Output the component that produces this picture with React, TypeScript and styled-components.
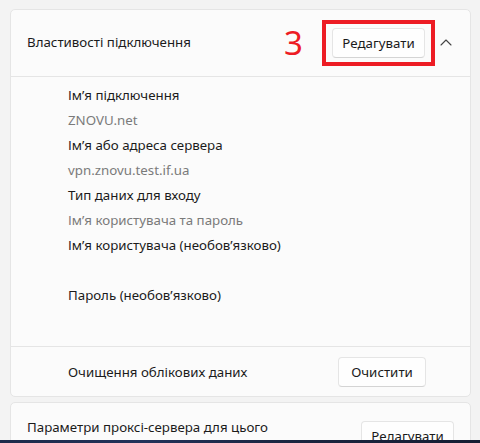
import styled, { createGlobalStyle } from "styled-components"

const GlobalStyle = createGlobalStyle`
	body {
		margin: 0;
		background: #f3f3f3;
		font-family: "Segoe UI", "Noto Sans", sans-serif;
		font-size: 13.3px;
		color: #1b1b1b;
	}
`

type Field = { text: string; muted?: boolean }

const fields: Field[] = [
	{ text: "Ім’я підключення" },
	{ text: "ZNOVU.net", muted: true },
	{ text: "Ім’я або адреса сервера" },
	{ text: "vpn.znovu.test.if.ua", muted: true },
	{ text: "Тип даних для входу" },
	{ text: "Ім’я користувача та пароль", muted: true },
	{ text: "Ім’я користувача (необов’язково)" },
	{ text: "" },
	{ text: "Пароль (необов’язково)" },
]

const ChevronUp = () => (
	<svg width="12" height="7" viewBox="0 0 12 7" fill="none">
		<path d="M1 6L6 1L11 6" stroke="#444" strokeWidth="1.1" strokeLinecap="round" strokeLinejoin="round" />
	</svg>
)

export default function App() {
	return (
		<>
			<GlobalStyle />
			<Page>
				<Card>
					<Header>
						<Title>Властивості підключення</Title>
						<StepNumber>3</StepNumber>
						<Highlight>
							<Button>Редагувати</Button>
						</Highlight>
						<Chevron>
							<ChevronUp />
						</Chevron>
					</Header>
					<Details>
						{fields.map((f, i) => (
							<FieldLine key={i} $muted={f.muted}>
								{f.text}
							</FieldLine>
						))}
					</Details>
					<FooterRow>
						<span>Очищення облікових даних</span>
						<Button $width={88}>Очистити</Button>
					</FooterRow>
				</Card>
				<Card>
					<ProxyRow>
						<ProxyText>Параметри проксі-сервера для цього підключення VPN</ProxyText>
						<Button $offset={4}>Редагувати</Button>
					</ProxyRow>
				</Card>
				<Taskbar />
			</Page>
		</>
	)
}

const Page = styled.div`
	position: relative;
	height: 443px;
	overflow: hidden;
	padding: 9px 9px 0 10px;
	box-sizing: border-box;
	display: flex;
	flex-direction: column;
	gap: 5px;
`

const Card = styled.div`
	background: #fbfbfb;
	border: 1px solid #e5e5e5;
	border-radius: 5px;
	flex-shrink: 0;
`

const Header = styled.div`
	height: 66px;
	display: flex;
	align-items: center;
	padding: 0 0 0 16px;
	border-bottom: 1px solid #e5e5e5;
`

const Title = styled.div`
	flex: 1;
	margin-top: -2px;
`

const StepNumber = styled.div`
	color: #ed1c24;
	font-size: 33px;
	line-height: 1;
	margin-right: 19px;
	margin-top: -2px;
`

const Highlight = styled.div`
	border: 4px solid #ed1c24;
	padding: 4px 6px;
	display: flex;
`

const Button = styled.div<{ $width?: number; $offset?: number }>`
	width: ${(p) => p.$width ?? 93}px;
	height: 30px;
	margin-top: ${(p) => p.$offset ?? 0}px;
	box-sizing: border-box;
	display: flex;
	align-items: center;
	justify-content: center;
	background: #fefefe;
	border: 1px solid #e5e5e5;
	border-bottom-color: #d4d4d4;
	border-radius: 4px;
	color: #1b1b1b;
	flex-shrink: 0;
`

const Chevron = styled.div`
	width: 12px;
	margin: 0 18px 0 5px;
	display: flex;
	align-items: center;
	padding-bottom: 2px;
`

const Details = styled.div`
	padding: 6px 0 38px 57px;
	border-bottom: 1px solid #e5e5e5;
`

const FieldLine = styled.div<{ $muted?: boolean }>`
	height: 25px;
	line-height: 25px;
	color: ${(p) => (p.$muted ? "#7a7a7a" : "#1b1b1b")};
`

const FooterRow = styled.div`
	height: 49px;
	display: flex;
	align-items: center;
	justify-content: space-between;
	padding: 0 44px 0 57px;
`

const ProxyRow = styled.div`
	display: flex;
	align-items: flex-start;
	justify-content: space-between;
	padding: 14px 16px 16px;
`

const ProxyText = styled.div`
	width: 300px;
	line-height: 20px;
`

const Taskbar = styled.div`
	position: absolute;
	left: 0;
	right: 0;
	bottom: 0;
	height: 3px;
	background: linear-gradient(90deg, #1c2a4a 0%, #22325a 30%, #1a2540 60%, #151d33 100%);
`
